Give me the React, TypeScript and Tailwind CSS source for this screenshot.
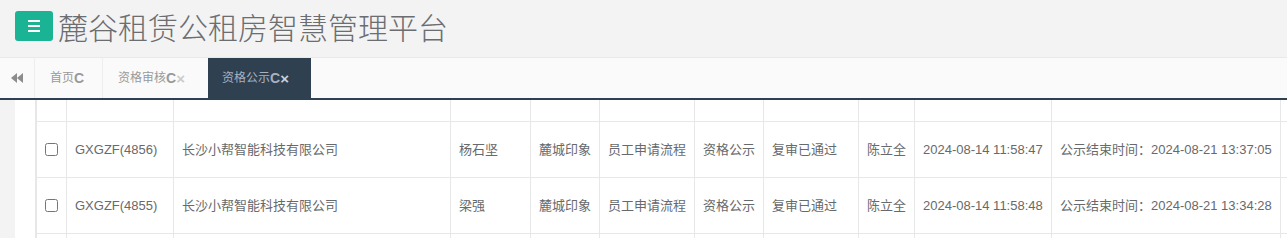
import React from 'react';

const rows = [
  {
    code: 'GXGZF(4856)',
    company: '长沙小帮智能科技有限公司',
    name: '杨石坚',
    project: '麓城印象',
    flow: '员工申请流程',
    stage: '资格公示',
    status: '复审已通过',
    operator: '陈立全',
    time: '2024-08-14 11:58:47',
    end: '公示结束时间：2024-08-21 13:37:05',
  },
  {
    code: 'GXGZF(4855)',
    company: '长沙小帮智能科技有限公司',
    name: '梁强',
    project: '麓城印象',
    flow: '员工申请流程',
    stage: '资格公示',
    status: '复审已通过',
    operator: '陈立全',
    time: '2024-08-14 11:58:48',
    end: '公示结束时间：2024-08-21 13:34:28',
  },
];

const gridCols =
  'grid grid-cols-[30px_107px_277px_80px_69px_95px_69px_95px_56px_137px_229px_1fr]';

function Cell({ children }: { children?: React.ReactNode }) {
  return (
    <div className="flex items-center px-[8px] border-r border-b border-[#e7e7e7] whitespace-nowrap overflow-hidden min-w-0">
      {children}
    </div>
  );
}

function BackIcon() {
  return (
    <svg width="12" height="10" viewBox="0 0 12 10" fill="#8c8c8c">
      <path d="M6 0 L0 5 L6 10 Z" />
      <path d="M12 0 L6 5 L12 10 Z" />
    </svg>
  );
}

export default function App() {
  return (
    <div className="w-[1287px] h-[238px] overflow-hidden bg-white font-['Liberation_Sans','Noto_Sans_CJK_SC',sans-serif] text-[#676a6c]">
      {/* header */}
      <div className="h-[58px] bg-[#f3f3f4] border-b border-[#e7eaec] flex items-start pl-[15px] pt-[11px]">
        <button className="w-[38px] h-[30px] rounded-[3px] bg-[#1ab394] flex flex-col items-center justify-center gap-[3px]">
          <span className="block w-[12px] h-[2px] bg-white" />
          <span className="block w-[12px] h-[2px] bg-white" />
          <span className="block w-[12px] h-[2px] bg-white" />
        </button>
        <h1 className="ml-[5px] h-[30px] flex items-center text-[30px] leading-none font-light text-[#6b6d70] font-['Noto_Sans_CJK_SC',sans-serif]">
          麓谷租赁公租房智慧管理平台
        </h1>
      </div>

      {/* tabs */}
      <div className="h-[42px] bg-[#fafafa] border-b-2 border-[#2f4050] flex text-[12px]">
        <div className="w-[35px] shrink-0 flex items-center justify-center border-r border-[#eeeeee]">
          <BackIcon />
        </div>
        <div className="w-[68px] shrink-0 flex items-center pl-[15px] border-r border-[#eeeeee] text-[#999999]">
          首页<span className="font-bold text-[14px] leading-none">C</span>
        </div>
        <div className="w-[105px] shrink-0 flex items-center pl-[15px] text-[#999999]">
          资格审核<span className="font-bold text-[14px] leading-none">C</span>
          <span className="font-bold text-[15px] leading-none text-[#cccccc]">×</span>
        </div>
        <div className="w-[103px] shrink-0 flex items-center pl-[14px] bg-[#2f4050] text-[#a7b1c2]">
          资格公示<span className="font-bold text-[14px] leading-none">C</span>
          <span className="font-bold text-[15px] leading-none text-[#c9d1dc]">×</span>
        </div>
      </div>

      {/* body */}
      <div className="flex h-[138px]">
        <div className="w-[15px] shrink-0 bg-[#f3f3f4]" />
        <div className="flex-1 min-w-0 pl-[20px] bg-white">
          <div className="border-l-2 border-[#e7e7e7] text-[13px]">
            <div className={`${gridCols} h-[22px]`}>
              {Array.from({ length: 12 }).map((_, i) => (
                <Cell key={i} />
              ))}
            </div>
            {rows.map((r) => (
              <div key={r.code} className={`${gridCols} h-[56px]`}>
                <Cell>
                  <input type="checkbox" className="m-0 w-[13px] h-[13px]" />
                </Cell>
                <Cell>{r.code}</Cell>
                <Cell>{r.company}</Cell>
                <Cell>{r.name}</Cell>
                <Cell>{r.project}</Cell>
                <Cell>{r.flow}</Cell>
                <Cell>{r.stage}</Cell>
                <Cell>{r.status}</Cell>
                <Cell>{r.operator}</Cell>
                <Cell>{r.time}</Cell>
                <Cell>{r.end}</Cell>
                <Cell />
              </div>
            ))}
            <div className={`${gridCols} h-[22px]`}>
              {Array.from({ length: 12 }).map((_, i) => (
                <Cell key={i} />
              ))}
            </div>
          </div>
        </div>
      </div>
    </div>
  );
}
